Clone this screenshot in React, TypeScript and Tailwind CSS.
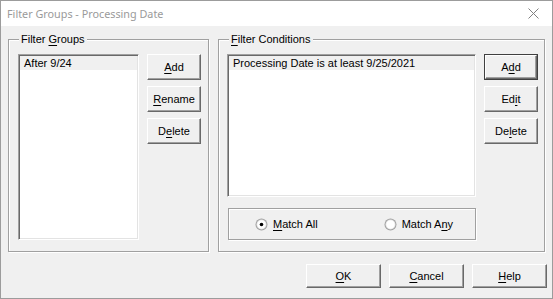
import React from "react";

const F = { fontFamily: '"Liberation Sans", Arial, sans-serif' };

function Btn({ children, w = "w-[54px]", h = "h-[26px]", def = false }: { children: React.ReactNode; w?: string; h?: string; def?: boolean }) {
  if (def) {
    return (
      <div className={`${w} ${h} border border-[#404040] flex`}>
        <div className="flex-1 flex items-center justify-center bg-[#f0f0f0] border border-t-white border-l-white border-r-[#696969] border-b-[#696969] shadow-[inset_-1px_-1px_0_#a0a0a0] text-[11px] text-black">
          {children}
        </div>
      </div>
    );
  }
  return (
    <div className={`${w} ${h} flex items-center justify-center bg-[#f0f0f0] border border-t-white border-l-white border-r-[#696969] border-b-[#696969] shadow-[inset_-1px_-1px_0_#a0a0a0] text-[11px] text-black`}>
      {children}
    </div>
  );
}

function U({ children }: { children: React.ReactNode }) {
  return <span className="underline underline-offset-[2px] decoration-1">{children}</span>;
}

function ListBox({ w, h, item }: { w: string; h: string; item: string }) {
  return (
    <div className={`${w} ${h} bg-white border border-t-[#a0a0a0] border-l-[#a0a0a0] border-r-white border-b-white shadow-[inset_1px_1px_0_#696969,inset_-1px_-1px_0_#e3e3e3] p-[1px] flex flex-col`}>
      <div className="h-[14px] bg-[#f0f0f0] pl-[4px] text-[11px] leading-[14px] text-black whitespace-nowrap">{item}</div>
    </div>
  );
}

function Group({ w, label, children }: { w: string; label: React.ReactNode; children: React.ReactNode }) {
  return (
    <div className={`relative ${w} h-[213px] border border-[#a0a0a0] shadow-[1px_1px_0_white,inset_1px_1px_0_white]`}>
      <span className="absolute -top-[7px] left-[10px] bg-[#f0f0f0] px-[2px] text-[11px] leading-[13px] text-black whitespace-nowrap">{label}</span>
      {children}
    </div>
  );
}

function Radio({ checked }: { checked?: boolean }) {
  return (
    <svg width="13" height="13" viewBox="0 0 13 13">
      <circle cx="6.5" cy="6.5" r="6" fill="#a0a0a0" />
      <circle cx="6.5" cy="6.5" r="5" fill="#e3e3e3" />
      <circle cx="6.5" cy="6.5" r="4.2" fill="white" />
      {checked && <circle cx="6.5" cy="6.5" r="1.8" fill="black" />}
    </svg>
  );
}

export default function App() {
  return (
    <div style={F} className="w-[553px] h-[299px] bg-[#f0f0f0] border border-[#9c9c9c] flex flex-col">
      <div className="h-[25px] bg-white flex items-center justify-between pl-[6px] pr-[13px] shrink-0">
        <span className="text-[10.8px] pt-[1px] text-[#9a9a9a]" style={{ fontFamily: '"Noto Sans", "Liberation Sans", sans-serif' }}>
          Filter Groups - Processing Date
        </span>
        <svg width="11" height="11" viewBox="0 0 11 11">
          <path d="M0.5 0.5 L10.5 10.5 M10.5 0.5 L0.5 10.5" stroke="#808080" strokeWidth="1" />
        </svg>
      </div>
      <div className="flex pt-[13px] pl-[7px] gap-[9px]">
        <Group w="w-[201px]" label={<>Filter <U>G</U>roups</>}>
          <div className="flex pt-[14px] pl-[9px] gap-[8px]">
            <ListBox w="w-[121px]" h="h-[186px]" item="After 9/24" />
            <div className="flex flex-col gap-[6px]">
              <Btn><U>A</U>dd</Btn>
              <Btn><U>R</U>ename</Btn>
              <Btn>D<U>e</U>lete</Btn>
            </div>
          </div>
        </Group>
        <Group w="w-[327px]" label={<><U>F</U>ilter Conditions</>}>
          <div className="flex pt-[14px] pl-[8px] gap-[8px]">
            <div className="flex flex-col gap-[11px]">
              <ListBox w="w-[249px]" h="h-[143px]" item="Processing Date is at least 9/25/2021" />
              <div className="ml-[1px] w-[248px] h-[32px] border border-[#a0a0a0] shadow-[1px_1px_0_white,inset_1px_1px_0_white] flex items-center text-[11px] text-black">
                <div className="flex items-center gap-[5px] ml-[26px]">
                  <Radio checked />
                  <span><U>M</U>atch All</span>
                </div>
                <div className="flex items-center gap-[5px] ml-[66px]">
                  <Radio />
                  <span>Match A<U>n</U>y</span>
                </div>
              </div>
            </div>
            <div className="flex flex-col gap-[6px]">
              <Btn def>A<U>d</U>d</Btn>
              <Btn>Ed<U>i</U>t</Btn>
              <Btn>De<U>l</U>ete</Btn>
            </div>
          </div>
        </Group>
      </div>
      <div className="flex justify-end gap-[8px] pr-[5px] pt-[12px]">
        <Btn w="w-[75px]" h="h-[24px]"><U>O</U>K</Btn>
        <Btn w="w-[75px]" h="h-[24px]"><U>C</U>ancel</Btn>
        <Btn w="w-[75px]" h="h-[24px]"><U>H</U>elp</Btn>
      </div>
    </div>
  );
}
